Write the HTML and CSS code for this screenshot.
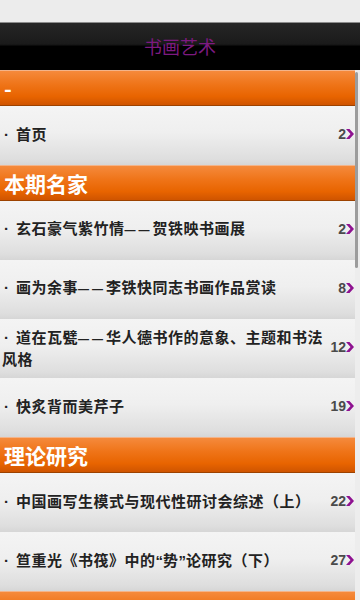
FILE: index.html
```html
<!DOCTYPE html>
<html>
  <head>
    <meta charset="utf-8">
    <title>书画艺术</title>
    <link rel="stylesheet" href="styles.css">
  </head>
  <body>
    <div class="statusbar"></div>
    <div class="titlebar">书画艺术</div>

    <div class="list">
      <div class="section">-</div>
      <div class="item">
        <span class="text">首页</span>
        <span class="page">2</span>
        <svg class="arrow" viewBox="0 0 8 10"><path d="M0 0 L3.5 0 L8 5 L3.5 10 L0 10 L4.5 5 Z"/></svg>
      </div>

      <div class="section">本期名家</div>
      <div class="item">
        <span class="text">玄石豪气紫竹情<span class="dash">——</span>贺铁映书画展</span>
        <span class="page">2</span>
        <svg class="arrow" viewBox="0 0 8 10"><path d="M0 0 L3.5 0 L8 5 L3.5 10 L0 10 L4.5 5 Z"/></svg>
      </div>
      <div class="item">
        <span class="text">画为余事<span class="dash">——</span>李铁快同志书画作品赏读</span>
        <span class="page">8</span>
        <svg class="arrow" viewBox="0 0 8 10"><path d="M0 0 L3.5 0 L8 5 L3.5 10 L0 10 L4.5 5 Z"/></svg>
      </div>
      <div class="item">
        <span class="text">道在瓦甓<span class="dash">——</span>华人德书作的意象、主题和书法风格</span>
        <span class="page">12</span>
        <svg class="arrow" viewBox="0 0 8 10"><path d="M0 0 L3.5 0 L8 5 L3.5 10 L0 10 L4.5 5 Z"/></svg>
      </div>
      <div class="item">
        <span class="text">快炙背而美芹子</span>
        <span class="page">19</span>
        <svg class="arrow" viewBox="0 0 8 10"><path d="M0 0 L3.5 0 L8 5 L3.5 10 L0 10 L4.5 5 Z"/></svg>
      </div>

      <div class="section">理论研究</div>
      <div class="item">
        <span class="text">中国画写生模式与现代性研讨会综述（上）</span>
        <span class="page">22</span>
        <svg class="arrow" viewBox="0 0 8 10"><path d="M0 0 L3.5 0 L8 5 L3.5 10 L0 10 L4.5 5 Z"/></svg>
      </div>
      <div class="item">
        <span class="text">笪重光《书筏》中的<span class="quote">“</span>势<span class="quote">”</span>论研究（下）</span>
        <span class="page">27</span>
        <svg class="arrow" viewBox="0 0 8 10"><path d="M0 0 L3.5 0 L8 5 L3.5 10 L0 10 L4.5 5 Z"/></svg>
      </div>

      <div class="section"></div>
    </div>

    <div class="scrollbar"></div>
  </body>
</html>
```

FILE: styles.css
```css
html, body { margin: 0; padding: 0; }
body {
  width: 360px;
  height: 600px;
  overflow: hidden;
  position: relative;
  background: #ededed;
  font-family: "Noto Sans CJK SC", "Noto Sans", sans-serif;
}

.statusbar {
  height: 22px;
  background: #ececec;
  border-bottom: 1px solid #8c8c8c;
}

.titlebar {
  height: 47px;
  line-height: 46px;
  text-align: center;
  color: #7d1a80;
  font-size: 18px;
  background: linear-gradient(#262626 0, #1a1a1a 45%, #000 50%, #000 100%);
}

.list { margin-right: 5px; }

.section {
  height: 36px;
  line-height: 35px;
  padding-left: 4px;
  color: #fff;
  font-size: 21px;
  font-weight: bold;
  box-sizing: border-box;
  border-top: 1px solid #f3b48a;
  border-bottom: 1px solid #9c4200;
  background: linear-gradient(#f58a3c 0, #ef7418 40%, #e86400 75%, #cf5400 100%);
}

.item {
  display: flex;
  align-items: center;
  min-height: 59px;
  box-sizing: border-box;
  padding: 0 1px 0 2px;
  background: linear-gradient(#f4f4f4 0, #efefef 45%, #dedede 90%, #d6d6d6 100%);
}

.text {
  flex: 1;
  font-size: 15px;
  line-height: 19px;
  letter-spacing: 0.5px;
  font-weight: bold;
  color: #222;
  padding-bottom: 3px;
}

.text::before {
  content: "·";
  display: inline-block;
  width: 12px;
  padding-left: 2px;
  font-family: "Liberation Sans", sans-serif;
}

.dash {
  font-family: "Liberation Sans", sans-serif;
  font-size: 11px;
  letter-spacing: 3px;
}

.quote {
  font-family: "Liberation Sans", sans-serif;
  letter-spacing: 0;
}

.page {
  font-family: "Liberation Sans", "DejaVu Sans", sans-serif;
  font-size: 14px;
  font-weight: bold;
  color: #4a4a4a;
  padding-bottom: 3px;
}

.arrow {
  width: 8px;
  height: 10px;
  fill: #8e1190;
  margin-bottom: 3px;
}

.scrollbar {
  position: absolute;
  right: 2px;
  top: 72px;
  width: 3px;
  height: 196px;
  border-radius: 2px;
  background: #9c9c9c;
}
```
